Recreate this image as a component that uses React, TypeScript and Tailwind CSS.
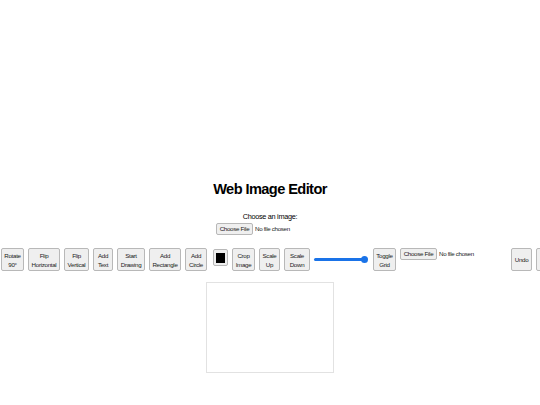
import React from "react";

const FONT = "font-['Liberation_Sans',Arial,sans-serif]";

function Btn({ lines, w }: { lines: string[]; w: string }) {
  return (
    <button
      className={`flex h-[23px] shrink-0 flex-col items-center justify-center overflow-hidden rounded-[2px] border border-[#b8b8b8] bg-[#efefef] text-[6.2px] leading-[9px] tracking-[-0.05em] text-[#222] ${w}`}
    >
      {lines.map((l) => (
        <span key={l} className="whitespace-nowrap">{l}</span>
      ))}
    </button>
  );
}

function FilePicker() {
  return (
    <div className="flex w-[107px] shrink-0 items-start">
      <span className="flex h-[12px] w-[37px] items-center justify-center rounded-[2px] border border-[#b8b8b8] bg-[#efefef] text-[6.2px] tracking-[-0.05em] text-[#222] whitespace-nowrap">
        Choose File
      </span>
      <span className="ml-[2px] mt-[2px] text-[6.2px] leading-[8px] tracking-[-0.05em] text-[#222] whitespace-nowrap">No file chosen</span>
    </div>
  );
}

export default function App() {
  return (
    <div className={`${FONT} flex h-[405px] w-[540px] flex-col items-center overflow-hidden bg-white pt-[180px] text-black`}>
      <h1 className="text-[14.6px] font-bold leading-[18px] tracking-[-0.04em]">Web Image Editor</h1>
      <p className="mt-[14px] text-[7.3px] leading-[9px] tracking-[-0.04em]">Choose an image:</p>
      <div className="mt-[2px] flex w-[108px] justify-start">
        <FilePicker />
      </div>

      <div className="mt-[13px] flex w-full items-start gap-[4px] overflow-hidden pl-[1px]">
        <Btn lines={["Rotate", "90°"]} w="w-[23px]" />
        <Btn lines={["Flip", "Horizontal"]} w="w-[32px]" />
        <Btn lines={["Flip", "Vertical"]} w="w-[25px]" />
        <Btn lines={["Add", "Text"]} w="w-[20px]" />
        <Btn lines={["Start", "Drawing"]} w="w-[28px]" />
        <Btn lines={["Add", "Rectangle"]} w="w-[32px]" />
        <Btn lines={["Add", "Circle"]} w="w-[22px]" />
        <div className="ml-[2px] mt-[1px] flex h-[17px] w-[15px] shrink-0 items-center justify-center rounded-[2px] border border-[#b8b8b8] bg-[#efefef]">
          <div className="h-[10px] w-[9px] bg-black" />
        </div>
        <Btn lines={["Crop", "Image"]} w="w-[23px]" />
        <Btn lines={["Scale", "Up"]} w="w-[21px]" />
        <Btn lines={["Scale", "Down"]} w="w-[26px]" />
        <div className="relative flex h-[23px] w-[55px] shrink-0 items-center">
          <div className="h-[3px] w-[50px] rounded-full bg-[#1a73e8]" />
          <div className="absolute left-[47px] top-[7.5px] h-[7px] w-[7px] rounded-full bg-[#1a73e8]" />
        </div>
        <Btn lines={["Toggle", "Grid"]} w="w-[23px]" />
        <FilePicker />
        <Btn lines={["Undo"]} w="w-[21px]" />
        <Btn lines={["Clear", "Canvas"]} w="w-[28px]" />
      </div>

      <div className="mt-[11px] h-[91px] w-[128px] border border-[#e2e2e2] bg-white" />
    </div>
  );
}
